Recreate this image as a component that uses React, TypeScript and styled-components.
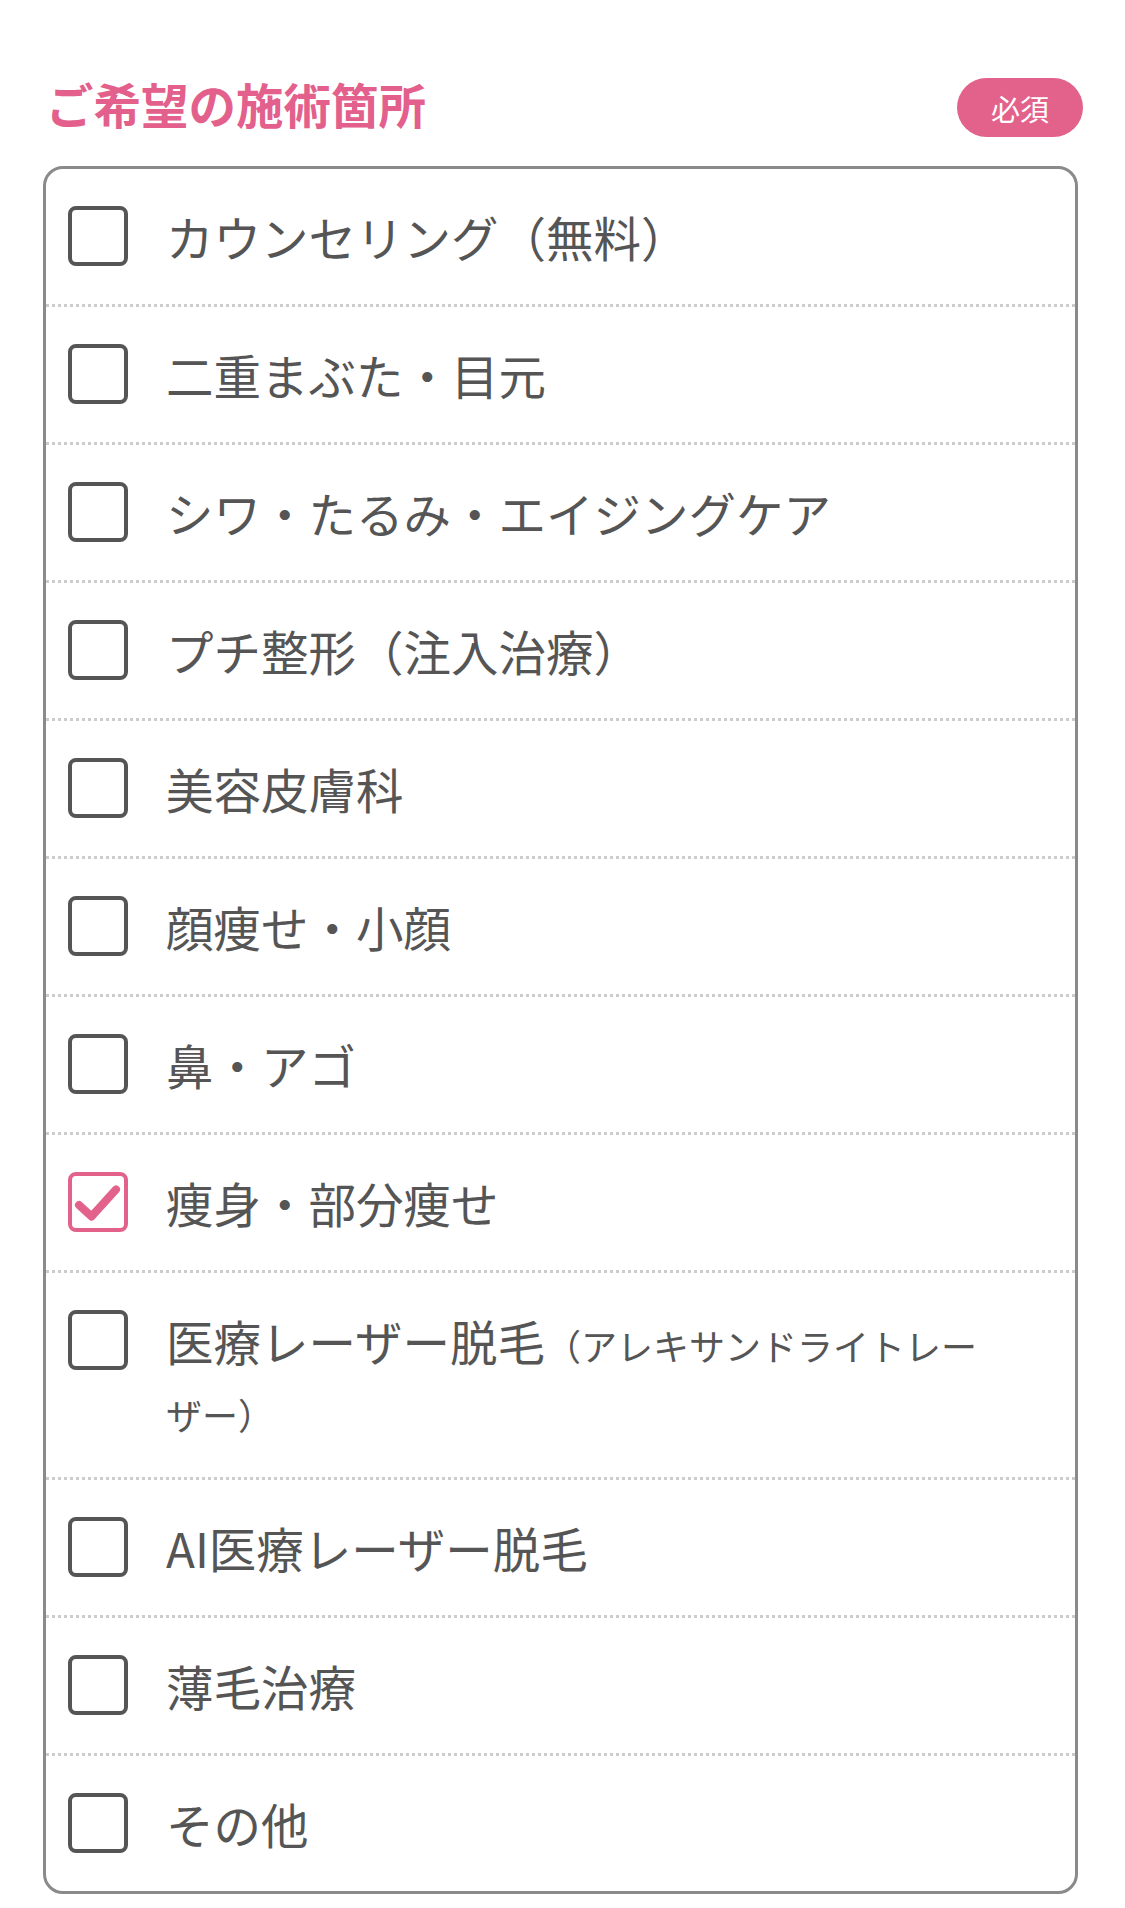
import React, { useState } from 'react';
import styled, { createGlobalStyle } from 'styled-components';

const GlobalStyle = createGlobalStyle`
    html, body {
        margin: 0;
        padding: 0;
        background: #ffffff;
    }

    body {
        font-family: "Noto Sans CJK JP", "Noto Sans", sans-serif;
        color: #555555;
    }
`;

interface Option {
    label: string;
    note?: string;
}

const OPTIONS: Option[] = [
    { label: 'カウンセリング（無料）' },
    { label: '二重まぶた・目元' },
    { label: 'シワ・たるみ・エイジングケア' },
    { label: 'プチ整形（注入治療）' },
    { label: '美容皮膚科' },
    { label: '顔痩せ・小顔' },
    { label: '鼻・アゴ' },
    { label: '痩身・部分痩せ' },
    { label: '医療レーザー脱毛', note: '（アレキサンドライトレーザー）' },
    { label: 'AI医療レーザー脱毛' },
    { label: '薄毛治療' },
    { label: 'その他' },
];

const App: React.FC = () => {
    const [checked, setChecked] = useState<string[]>(['痩身・部分痩せ']);

    const toggle = (label: string) => {
        setChecked((prev) =>
            prev.includes(label) ? prev.filter((l) => l !== label) : [...prev, label]
        );
    };

    return (
        <>
            <GlobalStyle />
            <Page>
                <Header>
                    <Title>ご希望の施術箇所</Title>
                    <Badge>必須</Badge>
                </Header>

                <OptionList>
                    {OPTIONS.map((opt) => {
                        const isOn = checked.includes(opt.label);
                        return (
                            <Row key={opt.label}>
                                <HiddenInput
                                    type="checkbox"
                                    checked={isOn}
                                    onChange={() => toggle(opt.label)}
                                />
                                <Box $checked={isOn}>
                                    {isOn && (
                                        <svg width="52" height="52" viewBox="0 0 52 52">
                                            <path
                                                d="M7 29 L19.5 40.5 L44 13.5"
                                                fill="none"
                                                stroke="#e3628c"
                                                strokeWidth="8"
                                                strokeLinecap="round"
                                                strokeLinejoin="round"
                                            />
                                        </svg>
                                    )}
                                </Box>
                                <Label>
                                    {opt.label}
                                    {opt.note && <Note>{opt.note}</Note>}
                                </Label>
                            </Row>
                        );
                    })}
                </OptionList>
            </Page>
        </>
    );
};

export default App;

const Page = styled.div`
    width: 1040px;
    padding: 78px 0 20px 43px;
`;

const Header = styled.div`
    display: flex;
    align-items: center;
    justify-content: space-between;
    height: 59px;
    padding-left: 3px;
    margin-bottom: 29px;
`;

const Title = styled.h2`
    margin: 0 0 8px 0;
    font-size: 47.5px;
    line-height: 1;
    font-weight: 700;
    color: #e2608b;
    letter-spacing: 0;
`;

const Badge = styled.span`
    display: flex;
    align-items: center;
    justify-content: center;
    width: 126px;
    height: 59px;
    border-radius: 30px;
    background: #e3628c;
    color: #ffffff;
    font-size: 29px;
    font-weight: 400;
`;

const OptionList = styled.div`
    margin-right: 5px;
    border: 3px solid #8a8a8a;
    border-radius: 20px;
    overflow: hidden;
`;

const Row = styled.label`
    display: flex;
    align-items: flex-start;
    gap: 38px;
    padding: 33px 90px 33px 22px;
    cursor: pointer;

    & + & {
        border-top: 3px dotted #cccccc;
    }
`;

const HiddenInput = styled.input`
    position: absolute;
    opacity: 0;
    width: 0;
    height: 0;
    margin: 0;
`;

const Box = styled.span<{ $checked: boolean }>`
    display: flex;
    align-items: center;
    justify-content: center;
    flex-shrink: 0;
    box-sizing: border-box;
    width: 60px;
    height: 60px;
    margin-top: 4px;
    border: 4.5px solid ${(props) => (props.$checked ? '#e3628c' : '#555555')};
    border-radius: 8px;
    background: #ffffff;
`;

const Label = styled.span`
    flex: 1;
    min-width: 0;
    font-size: 47.5px;
    line-height: 69px;
    color: #555555;
    font-weight: 400;
`;

const Note = styled.span`
    font-size: 36px;
    line-height: 1;
`;
